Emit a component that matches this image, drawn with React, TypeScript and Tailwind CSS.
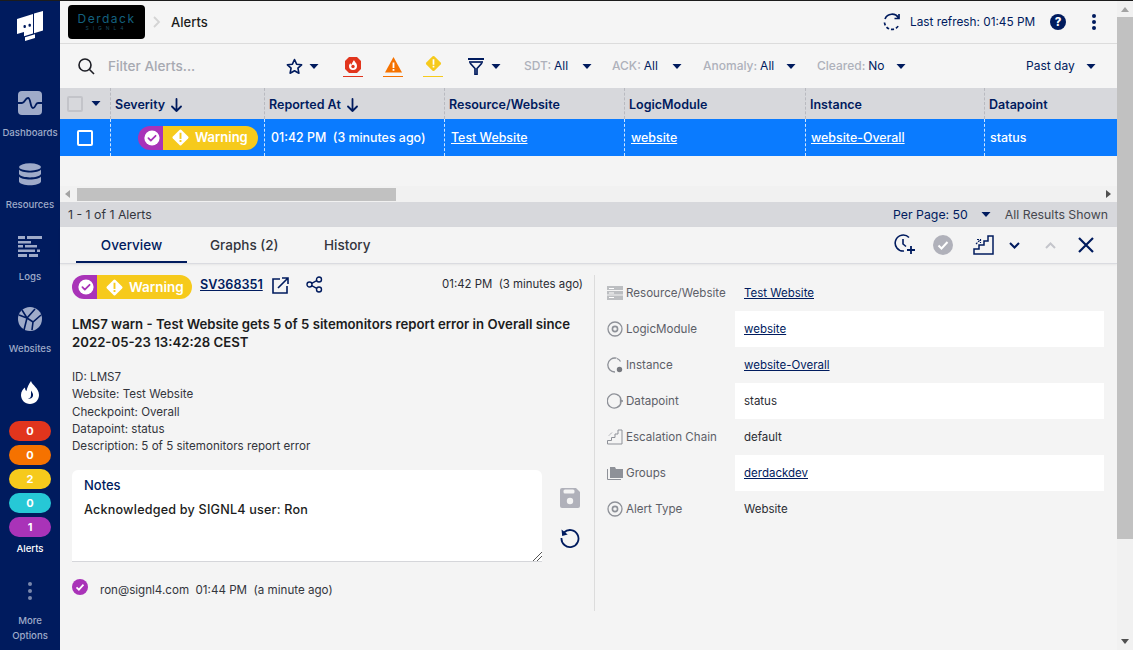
import React from "react";

const navy = "#001b5e";

function Caret({ c = navy, className = "" }: { c?: string; className?: string }) {
  return (
    <svg width="10" height="5" viewBox="0 0 10 5" className={className}>
      <path d="M0.5 0h9L5 5z" fill={c} />
    </svg>
  );
}

function SideItem({ icon, label, className = "" }: { icon: React.ReactNode; label: React.ReactNode; className?: string }) {
  return (
    <div className={"flex flex-col items-center " + className}>
      <div className="h-6 flex items-center justify-center">{icon}</div>
      <div className="mt-[10px] text-[9.6px] leading-[15px] text-[#9fabc9] text-center font-medium">{label}</div>
    </div>
  );
}

function Pill({ n, c }: { n: string; c: string }) {
  return (
    <div className={"w-[42px] h-5 rounded-full flex items-center justify-center text-white text-[11px] font-bold " + c}>{n}</div>
  );
}

function Check({ size = 16 }: { size?: number }) {
  return (
    <svg width={size} height={size} viewBox="0 0 20 20">
      <circle cx="10" cy="10" r="9.5" fill="#fff" />
      <path d="M5.5 10.2l3 3 6-6" fill="none" stroke="#a933b8" strokeWidth="2.2" strokeLinecap="round" strokeLinejoin="round" />
    </svg>
  );
}

function Diamond({ size = 19 }: { size?: number }) {
  return (
    <svg width={size} height={size} viewBox="0 0 20 20">
      <rect x="3.6" y="3.6" width="12.8" height="12.8" rx="1.5" transform="rotate(45 10 10)" fill="#fff" />
      <rect x="9" y="5" width="2" height="6.5" fill="#f6ca1c" />
      <rect x="9" y="12.7" width="2" height="2" fill="#f6ca1c" />
    </svg>
  );
}

function Badge({ font }: { font: string }) {
  return (
    <div className="flex w-[120px] h-6 rounded-full overflow-hidden shrink-0">
      <div className="w-[25px] pl-[2px] bg-[#a933b8] flex items-center justify-center">
        <Check />
      </div>
      <div className={"flex-1 bg-[#f6ca1c] flex items-center pl-[8px] gap-[5px] text-white font-semibold " + font}>
        <Diamond />
        <span className="pt-px">Warning</span>
      </div>
    </div>
  );
}

function Filt({ k, v, className }: { k: string; v: string; className: string }) {
  return (
    <div className={"flex items-center text-[12px] " + className}>
      <span className="text-[#aeb1bb] font-medium">{k}:</span>
      <span className="text-[#001b5e] ml-[3px]">{v}</span>
    </div>
  );
}

function HCell({ w, label, arrow, className = "" }: { w: string; label: string; arrow?: boolean; className?: string }) {
  return (
    <div className={"h-full flex items-center pl-[4px] border-r border-dashed border-[#b9bac0] shrink-0 gap-[6px] text-[12.5px] font-semibold text-[#001b5e] " + w + " " + className}>
      <span className="pt-[3px]">{label}</span>
      {arrow && (
        <svg width="11" height="14" viewBox="0 0 11 14" fill="none" stroke={navy} strokeWidth="1.8" strokeLinecap="round" strokeLinejoin="round" className="mt-[2px]">
          <path d="M5.5 1v12M1 8.5L5.5 13 10 8.5" />
        </svg>
      )}
    </div>
  );
}

function RCell({ w, children, link, className = "" }: { w: string; children?: React.ReactNode; link?: boolean; className?: string }) {
  return (
    <div className={"h-full flex items-center pl-[6px] border-r border-dashed border-white/80 shrink-0 text-[12.4px] font-medium text-white " + w + " " + className}>
      <span className={"pt-[2px] " + (link ? "underline" : "")}>{children}</span>
    </div>
  );
}

function Row({ icon, label, value, link, white }: { icon: React.ReactNode; label: string; value: string; link?: boolean; white?: boolean }) {
  return (
    <div className="flex items-center h-9">
      <div className="w-[21px] flex items-center justify-center ml-[-1px]">{icon}</div>
      <div className="w-[109px] ml-[1px] pt-[2px] text-[11.6px] text-[#5d6068]">{label}</div>
      <div className={"w-[369px] h-9 flex items-center pl-[9px] pt-[2px] text-[11.5px] " + (white ? "bg-white " : "") + (link ? "underline text-[#001b5e]" : "text-[#2a2c33]")}>{value}</div>
    </div>
  );
}

const Ring = () => (
  <svg width="16" height="16" viewBox="0 0 16 16" fill="none" stroke="#8e9198" strokeWidth="1.3">
    <circle cx="8" cy="8" r="7" />
    <circle cx="8" cy="8" r="2.6" strokeWidth="1.6" />
  </svg>
);

export default function App() {
  return (
    <div className="w-[1133px] h-[650px] overflow-hidden flex flex-col bg-[#f4f4f4] text-[#1b1c20]" style={{ fontFamily: "Inter, 'Noto Sans', sans-serif" }}>
      <div className="h-px bg-[#1c1c1c] shrink-0" />
      <div className="flex flex-1 min-h-0">
        {/* sidebar */}
        <aside className="w-[60px] shrink-0 bg-[#001b5e] flex flex-col items-center">
          <svg width="26" height="32" viewBox="0 0 26 32" className="mt-[9px]" fill="#fff">
            <path d="M0 9L16 4V23.500L7 26.200V22L0 24z" />
            <path d="M17 3.500L26 1V20.500L17 23.200z" />
            <path d="M8 27.200L18 24.200L18 28 8 31z" />
            <rect x="6.500" y="15" width="2.400" height="3" rx="1" fill="#001b5e" />
            <rect x="11.500" y="13.800" width="2.400" height="3" rx="1" fill="#001b5e" />
          </svg>
          <SideItem
            className="mt-[49px]"
            label="Dashboards"
            icon={
              <svg width="24" height="24" viewBox="0 0 24 24">
                <rect width="24" height="24" rx="4" fill="#9fabc9" />
                <path d="M0 12h4c3 0 3-5 6-5s2 10 5 10 2-5 5-5h4" fill="none" stroke="#001b5e" strokeWidth="1.8" />
              </svg>
            }
          />
          <SideItem
            className="mt-[23px]"
            label="Resources"
            icon={
              <svg width="24" height="24" viewBox="0 0 24 24" fill="#9fabc9">
                <ellipse cx="12" cy="4" rx="11" ry="3.700" />
                <path d="M1 6.500c2 4 20 4 22 0v4.500c-2 4.500-20 4.500-22 0z" />
                <path d="M1 13.500c2 4 20 4 22 0v5c-1.500 5-20.500 5-22 0z" />
              </svg>
            }
          />
          <SideItem
            className="mt-[23px]"
            label="Logs"
            icon={
              <svg width="24" height="24" viewBox="0 0 24 24" fill="#9fabc9">
                <rect x="0" y="1" width="7" height="3" />
                <rect x="9" y="1" width="15" height="3" />
                <rect x="0" y="6" width="13" height="2.500" />
                <rect x="0" y="10" width="5" height="2.500" />
                <rect x="7" y="10" width="12" height="2.500" />
                <rect x="0" y="14.500" width="17" height="2.500" />
                <rect x="19" y="14.500" width="3" height="2.500" />
                <rect x="0" y="19" width="9" height="3" />
                <rect x="11" y="19" width="9" height="3" />
              </svg>
            }
          />
          <SideItem
            className="mt-[23px]"
            label="Websites"
            icon={
              <svg width="24" height="24" viewBox="0 0 24 24">
                <circle cx="12" cy="12" r="12" fill="#9fabc9" />
                <path d="M1 8l8 3 8-9M9 11l-3 12M9 11l6 4 8-7M15 15l-1 8M4 3l5 8" fill="none" stroke="#001b5e" strokeWidth="1.6" />
              </svg>
            }
          />
          <svg width="18" height="23" viewBox="0 0 18 23" className="mt-[25px]">
            <path d="M10 0c1 4 8 7 8 14 0 5-4 9-9 9s-9-4-9-9c0-3.500 2-6 4-7.500 0 2 .5 3 1.500 3.500C6 6.500 8 3 10 0z" fill="#fff" />
            <path d="M10 9.500c1 2 2.500 3 2 5.500-.5 2-3 3.500-5 2.500 2 0 3-1.500 3-3.500z" fill="#001b5e" />
          </svg>
          <div className="mt-[17px] flex flex-col gap-1">
            <Pill n="0" c="bg-[#e1351d]" />
            <Pill n="0" c="bg-[#f57200]" />
            <Pill n="2" c="bg-[#f6ca1c]" />
            <Pill n="0" c="bg-[#26c8d6]" />
            <Pill n="1" c="bg-[#a933b8]" />
          </div>
          <div className="text-[9.6px] leading-[15px] text-white font-medium mt-1">Alerts</div>
          <svg width="6" height="20" viewBox="0 0 6 20" fill="#7a88ac" className="mt-[25px]">
            <circle cx="3" cy="3" r="2" />
            <circle cx="3" cy="10" r="2" />
            <circle cx="3" cy="17" r="2" />
          </svg>
          <div className="text-[9.6px] leading-[15px] text-[#9fabc9] text-center font-medium mt-[12px]">
            More
            <br />
            Options
          </div>
        </aside>

        {/* main */}
        <main className="flex-1 min-w-0 flex flex-col">
          {/* top bar */}
          <div className="h-[43px] shrink-0 flex items-center border-b border-[#dcdcdc] bg-[#f5f5f5]">
            <div className="ml-2 w-[77px] h-[34px] bg-black rounded-[4px] flex flex-col items-center justify-center">
              <div className="text-[12px] leading-[12px] tracking-[1.5px] text-[#14607f]">Derdack</div>
              <div className="text-[5px] leading-[6px] tracking-[4px] text-[#1a4a5e]">SIGNL4</div>
            </div>
            <svg width="8" height="12" viewBox="0 0 8 12" fill="none" stroke="#d4d4d4" strokeWidth="1.800" className="ml-[8px]">
              <path d="M1 1l5 5-5 5" />
            </svg>
            <div className="ml-[10px] pt-[2px] text-[13px] font-medium">Alerts</div>
            <div className="flex-1" />
            <svg width="18" height="18" viewBox="0 0 18 18" fill="none" stroke={navy} strokeWidth="1.700">
              <path d="M15.500 5A7.500 7.500 0 0 0 2 6" />
              <path d="M16 1v4.500h-4.500" strokeLinejoin="miter" />
              <path d="M1.500 9.500a7.500 7.500 0 0 0 14.500 2" strokeDasharray="3 2" />
            </svg>
            <div className="ml-[9px] w-[135px] pt-[2px] text-[11.8px] text-[#001b5e] whitespace-nowrap">Last refresh: 01:45 PM</div>
            <svg width="16" height="16" viewBox="0 0 16 16" className="ml-[5px]">
              <circle cx="8" cy="8" r="8" fill={navy} />
              <text x="8" y="12" textAnchor="middle" fontSize="11.500" fontWeight="800" fill="#fff">?</text>
            </svg>
            <svg width="6" height="18" viewBox="0 0 6 18" fill={navy} className="ml-[25px] mr-[20px]">
              <circle cx="3" cy="3" r="2" />
              <circle cx="3" cy="9" r="2" />
              <circle cx="3" cy="15" r="2" />
            </svg>
          </div>

          {/* toolbar */}
          <div className="h-[44px] shrink-0 flex items-center bg-[#f5f5f5] relative">
            <svg width="17" height="17" viewBox="0 0 17 17" fill="none" stroke="#1c1d24" strokeWidth="1.600" className="ml-[18px]">
              <circle cx="7" cy="7" r="6" />
              <path d="M11.500 11.500L16 16" />
            </svg>
            <div className="ml-[13px] w-[178px] text-[13.6px] font-medium text-[#a7a9b1]">Filter Alerts...</div>
            <svg width="17" height="17" viewBox="0 0 17 17" fill="none" stroke={navy} strokeWidth="1.600" strokeLinejoin="round">
              <path d="M8.500 1.500l2.100 4.700 5 .6-3.700 3.400 1 5-4.400-2.500-4.400 2.500 1-5L1.400 6.800l5-.6z" />
            </svg>
            <Caret className="ml-[6px]" />
            <div className="ml-[24px] w-5 h-[22px] flex flex-col items-center justify-between pt-[2px] border-b border-[#e1351d]">
              <svg width="16" height="16" viewBox="0 0 16 16">
                <path d="M4 0h8l4 4v8l-4 4H4l-4-4V4z" fill="#e1351d" />
                <path d="M9 3c.500 2 3 3 3 6a4 4 0 0 1-8 0c0-1.500 1-2.500 1.500-3 0 1 .5 1.500 1 1.500C7 6 8 4.500 9 3z" fill="#fff" />
                <circle cx="8" cy="9.500" r="1.700" fill="#e1351d" />
              </svg>
            </div>
            <div className="ml-[20px] w-5 h-[22px] flex flex-col items-center justify-between pt-[2px] border-b border-[#f57200]">
              <svg width="17" height="16" viewBox="0 0 17 16">
                <path d="M8.500 0L17 15.500H0z" fill="#f57200" />
                <rect x="7.600" y="5.500" width="1.800" height="5.500" fill="#fff" />
                <rect x="7.600" y="12" width="1.800" height="1.800" fill="#fff" />
              </svg>
            </div>
            <div className="ml-[20px] w-5 h-[22px] flex flex-col items-center justify-between border-b border-[#f6ca1c]">
              <svg width="17" height="17" viewBox="0 0 20 20">
                <rect x="3.300" y="3.300" width="13.400" height="13.400" rx="1.500" transform="rotate(45 10 10)" fill="#f6ca1c" />
                <rect x="9" y="5" width="2" height="6.500" fill="#fff" />
                <rect x="9" y="12.700" width="2" height="2" fill="#fff" />
              </svg>
            </div>
            <svg width="16" height="17" viewBox="0 0 16 17" fill="none" stroke={navy} strokeWidth="1.700" className="ml-[25px]">
              <path d="M0 1h16" strokeWidth="2" />
              <path d="M1 4h14" />
              <path d="M2 5l5 5.500V16.500h2V10.500L14 5" />
            </svg>
            <Caret className="ml-[7px]" />
            <Filt k="SDT" v="All" className="ml-[23px] w-[44px]" />
            <Caret className="ml-[14px]" />
            <Filt k="ACK" v="All" className="ml-[20px] w-[47px]" />
            <Caret className="ml-[13px]" />
            <Filt k="Anomaly" v="All" className="ml-[21px] w-[70px]" />
            <Caret className="ml-[13px]" />
            <Filt k="Cleared" v="No" className="ml-[21px] w-[67px]" />
            <Caret className="ml-[12px]" />
            <div className="ml-[120px] w-[46px] text-[12px] text-[#001b5e] whitespace-nowrap">Past day</div>
            <Caret className="ml-[14px]" />
          </div>

          {/* table header */}
          <div className="h-[31px] shrink-0 flex bg-[#d7d8dc]">
            <div className="w-[51px] h-full shrink-0 flex items-center pl-[7px] gap-[8px] border-r border-dashed border-[#b9bac0]">
              <div className="w-4 h-4 rounded-[2px] border-2 border-[#c3c4c9]" />
              <Caret />
            </div>
            <HCell w="w-[154px]" label="Severity" arrow />
            <HCell w="w-[180px]" label="Reported At" arrow />
            <HCell w="w-[180px]" label="Resource/Website" />
            <HCell w="w-[181px]" label="LogicModule" />
            <HCell w="w-[179px]" label="Instance" />
            <HCell w="w-[132px] !border-r-0" label="Datapoint" />
          </div>

          {/* selected row */}
          <div className="h-[37px] shrink-0 flex bg-[#0a7bff]">
            <div className="w-[51px] h-full shrink-0 flex items-center justify-center border-r border-dashed border-white/80">
              <div className="w-4 h-4 rounded-[2px] border-2 border-white" />
            </div>
            <div className="w-[154px] h-full shrink-0 flex items-center justify-end pr-[6px] border-r border-dashed border-white/80">
              <Badge font="text-[13px]" />
            </div>
            <RCell w="w-[180px]">01:42 PM&nbsp;&nbsp;(3 minutes ago)</RCell>
            <RCell w="w-[180px]" link>Test Website</RCell>
            <RCell w="w-[181px]" link>website</RCell>
            <RCell w="w-[179px] !pl-[5px]" link>website-Overall</RCell>
            <RCell w="w-[132px] !border-r-0 !pl-[5px]">status</RCell>
          </div>

          <div className="h-[30px] shrink-0" />

          {/* horizontal scrollbar */}
          <div className="h-4 shrink-0 flex items-center bg-[#f1f1f1]">
            <svg width="5" height="8" viewBox="0 0 5 8" className="ml-[5px]">
              <path d="M5 0v8L0 4z" fill="#a3a3a3" />
            </svg>
            <div className="ml-[7px] w-[319px] h-[13px] bg-[#c1c1c1]" />
            <div className="flex-1" />
            <svg width="5" height="8" viewBox="0 0 5 8" className="mr-[6px]">
              <path d="M0 0v8l5-4z" fill="#505050" />
            </svg>
          </div>

          {/* pagination */}
          <div className="h-[25px] shrink-0 flex items-center bg-[#d7d8dc] text-[12.3px]">
            <div className="ml-2 pt-px text-[#33353c]">1 - 1 of 1 Alerts</div>
            <div className="flex-1" />
            <div className="text-[#001b5e] pt-px">Per Page: 50</div>
            <Caret className="ml-[13px]" />
            <div className="ml-[14px] mr-[9px] pt-px text-[#45474e]">All Results Shown</div>
          </div>

          {/* tabs */}
          <div className="h-[37px] shrink-0 flex items-stretch border-b border-[#dadbe0] bg-[#f4f4f4] shadow-[0_1px_2px_rgba(0,0,0,0.06)]">
            <div className="ml-[16px] w-[111px] pt-[3px] flex items-center justify-center border-b-2 border-[#001b5e] text-[13.5px] font-medium text-[#001b5e]">Overview</div>
            <div className="ml-[23px] w-[114px] pt-[1px] flex items-center text-[13.5px] font-medium text-[#33353c]">Graphs (2)</div>
            <div className="flex items-center pt-[1px] text-[13.5px] font-medium text-[#33353c]">History</div>
            <div className="flex-1" />
            <div className="flex items-center mr-[23px]">
              <svg width="22" height="22" viewBox="0 0 22 22" fill="none" stroke={navy} strokeWidth="1.600">
                <path d="M15 3.500A8 8 0 1 0 10 17" />
                <path d="M9 5v5l3 2.500" />
                <path d="M17 12v8M13 16h8" strokeWidth="1.800" />
              </svg>
              <svg width="20" height="20" viewBox="0 0 20 20" className="ml-[17px]">
                <circle cx="10" cy="10" r="10" fill="#b0b1ba" />
                <path d="M5.500 10.500l3 3 6-6.500" fill="none" stroke="#fff" strokeWidth="2" />
              </svg>
              <svg width="21" height="20" viewBox="0 0 21 20" fill="none" stroke={navy} strokeWidth="1.500" className="ml-[20px]">
                <path d="M20 1v18H1v-5h5v-4h5V6h4V1z" />
                <path d="M3 9l4-4M4 4.500h3.500V8" strokeWidth="1.200" strokeDasharray="2 1" />
              </svg>
              <svg width="11" height="7" viewBox="0 0 11 7" fill="none" stroke={navy} strokeWidth="2" className="ml-[15px]">
                <path d="M1 1l4.500 4.500L10 1" />
              </svg>
              <svg width="11" height="7" viewBox="0 0 11 7" fill="none" stroke="#c4c5cb" strokeWidth="2" className="ml-[25px]">
                <path d="M1 6l4.500-4.500L10 6" />
              </svg>
              <svg width="16" height="16" viewBox="0 0 16 16" fill="none" stroke={navy} strokeWidth="2.200" className="ml-[22px]">
                <path d="M1 1l14 14M15 1L1 15" />
              </svg>
            </div>
          </div>

          {/* detail */}
          <div className="flex-1 min-h-0 flex pt-[11px]">
            <div className="w-[535px] h-[336px] shrink-0 border-r border-[#dcdcdc] pl-3 pr-[11px]">
              <div className="flex items-start h-6">
                <Badge font="text-[13.5px]" />
                <div className="ml-2 mt-[1px] text-[12.6px] font-semibold underline text-[#001b5e]">SV368351</div>
                <svg width="17" height="17" viewBox="0 0 17 17" fill="none" stroke={navy} strokeWidth="1.600" className="ml-[9px] mt-[2px]">
                  <path d="M8 2H1v14h14V9" />
                  <path d="M6 11L16 1M10 1h6v6" />
                </svg>
                <svg width="17" height="17" viewBox="0 0 17 17" fill="none" stroke={navy} strokeWidth="1.400" className="ml-[17px] mt-[1px]">
                  <circle cx="3.500" cy="8.500" r="2.500" />
                  <circle cx="13" cy="3.500" r="2.500" />
                  <circle cx="13" cy="13.500" r="2.500" />
                  <path d="M5.700 7.300l5-2.600M5.700 9.700l5 2.600" />
                </svg>
                <div className="flex-1" />
                <div className="text-[11.4px] mt-[1px] text-[#2a2c33]">01:42 PM&nbsp;&nbsp;(3 minutes ago)</div>
              </div>
              <div className="mt-[16px] text-[13.2px] leading-[18px] font-semibold text-[#1b1c20] whitespace-nowrap">
                LMS7 warn - Test Website gets 5 of 5 sitemonitors report error in Overall since
                <br />
                2022-05-23 13:42:28 CEST
              </div>
              <div className="mt-[18px] text-[11.6px] leading-[17.3px] text-[#33353c]">
                <div>ID: LMS7</div>
                <div>Website: Test Website</div>
                <div>Checkpoint: Overall</div>
                <div>Datapoint: status</div>
                <div>Description: 5 of 5 sitemonitors report error</div>
              </div>
              <div className="flex mt-[15px]">
                <div className="w-[470px] h-[92px] bg-white rounded-t-[6px] border-b border-[#d5d6da] pl-3 pt-[6px] relative">
                  <div className="text-[13px] leading-[18px] font-medium text-[#001b5e]">Notes</div>
                  <div className="mt-[7px] text-[12.6px] leading-[18px] font-medium whitespace-nowrap tracking-[0.2px]">Acknowledged by SIGNL4 user: Ron</div>
                  <svg width="9" height="9" viewBox="0 0 9 9" stroke="#555" strokeWidth="1" className="absolute right-0 bottom-0">
                    <path d="M0 9l9-9M4 9l5-5" />
                  </svg>
                </div>
                <div className="ml-[18px] pt-[18px] flex flex-col">
                  <svg width="20" height="20" viewBox="0 0 20 20">
                    <path d="M2 0h14l4 4v14a2 2 0 0 1-2 2H2a2 2 0 0 1-2-2V2a2 2 0 0 1 2-2z" fill="#b0b1ba" />
                    <rect x="3.500" y="1.500" width="11" height="4" rx="1.500" fill="#f4f4f4" />
                    <circle cx="10" cy="13" r="3.200" fill="#f4f4f4" />
                  </svg>
                  <svg width="20" height="20" viewBox="0 0 20 20" fill="none" stroke={navy} strokeWidth="1.800" className="mt-5">
                    <path d="M4 4.500A8.500 8.500 0 1 1 1.500 10" />
                    <path d="M1.500 1.500l.7 6.500 5.500-1.500z" fill={navy} stroke="none" />
                  </svg>
                </div>
              </div>
              <div className="mt-[17px] flex items-start">
                <svg width="16" height="16" viewBox="0 0 16 16">
                  <circle cx="8" cy="8" r="8" fill="#a933b8" />
                  <path d="M4.500 8.300l2.400 2.400 4.600-5" fill="none" stroke="#fff" strokeWidth="1.700" />
                </svg>
                <div className="ml-3 mt-[3px] leading-[17px] text-[11.6px] text-[#33353c] whitespace-nowrap">ron@signl4.com&nbsp;&nbsp;01:44 PM&nbsp;&nbsp;(a minute ago)</div>
              </div>
            </div>
            <div className="flex-1 min-w-0 pl-[10px] h-[252px]">
              <Row
                label="Resource/Website"
                value="Test Website"
                link
                icon={
                  <svg width="16" height="16" viewBox="0 0 16 16" fill="#8e9198">
                    <path d="M0 1h16v14H0z" fillOpacity=".55" />
                    <path d="M0 5.500h16M0 10h16" stroke="#f4f4f4" />
                    <path d="M2 3h5v1H2zM2 7.500h5v1H2zM2 12h5v1H2z" fill="#fff" />
                  </svg>
                }
              />
              <Row label="LogicModule" value="website" link white icon={<Ring />} />
              <Row
                label="Instance"
                value="website-Overall"
                link
                icon={
                  <svg width="16" height="16" viewBox="0 0 16 16" fill="none" stroke="#8e9198" strokeWidth="1.300">
                    <path d="M9.500 1.200A7 7 0 1 0 8 15" />
                    <path d="M10 1.500a7 7 0 0 1 3.500 3" />
                    <circle cx="12.500" cy="12.500" r="2.700" fill="#77797f" stroke="none" />
                  </svg>
                }
              />
              <Row
                label="Datapoint"
                value="status"
                white
                icon={
                  <svg width="16" height="16" viewBox="0 0 16 16" fill="none" stroke="#8e9198" strokeWidth="1.300">
                    <path d="M14 6A7 7 0 1 0 14 10" />
                    <path d="M13.500 6.500L15.500 8l-2 1.500z" fill="#8e9198" />
                  </svg>
                }
              />
              <Row
                label="Escalation Chain"
                value="default"
                icon={
                  <svg width="16" height="16" viewBox="0 0 16 16" fill="none" stroke="#8e9198" strokeWidth="1">
                    <path d="M15 1v14H0.500v-3.500h4v-3h3.500V5h3V1z" />
                    <path d="M2 6.500l3-3" strokeDasharray="1.500 1" />
                  </svg>
                }
              />
              <Row
                label="Groups"
                value="derdackdev"
                link
                white
                icon={
                  <svg width="16" height="16" viewBox="0 0 16 16" fill="#8e9198">
                    <path d="M3 2h5l1 2h7v9H3z" />
                    <path d="M0.500 4v10.500H14" fill="none" stroke="#8e9198" />
                  </svg>
                }
              />
              <Row label="Alert Type" value="Website" icon={<Ring />} />
            </div>
          </div>
        </main>

        {/* vertical scrollbar */}
        <div className="w-4 shrink-0 bg-[#f1f1f1] flex flex-col items-center">
          <svg width="8" height="5" viewBox="0 0 8 5" className="mt-[6px]">
            <path d="M0 5h8L4 0z" fill="#a3a3a3" />
          </svg>
          <div className="mt-[5px] w-full h-[522px] bg-[#c1c1c1]" />
          <div className="flex-1" />
          <svg width="8" height="5" viewBox="0 0 8 5" className="mb-[6px]">
            <path d="M0 0h8L4 5z" fill="#505050" />
          </svg>
        </div>
      </div>
    </div>
  );
}
